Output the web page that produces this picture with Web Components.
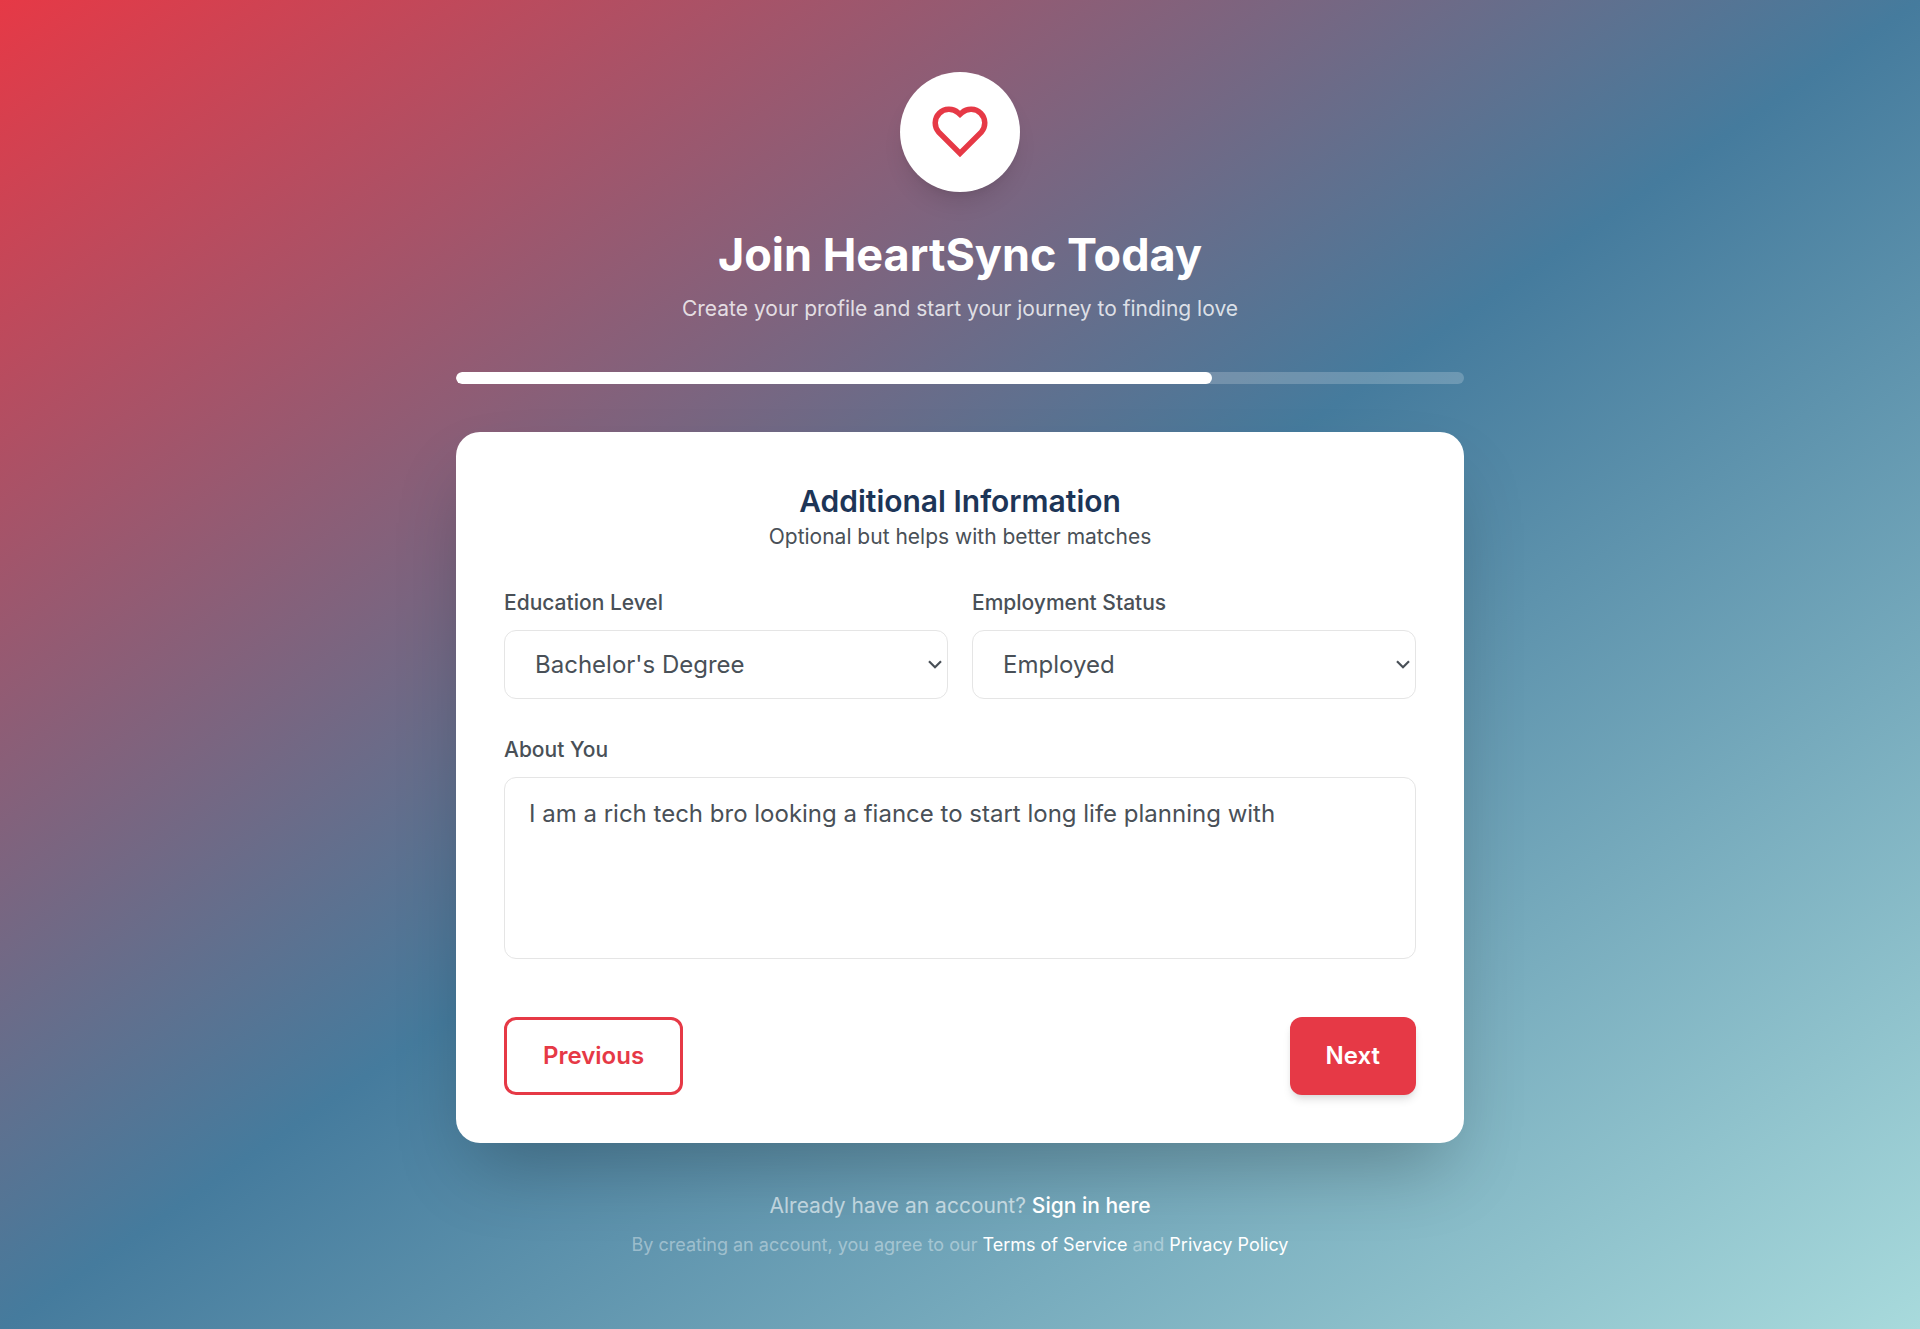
<!DOCTYPE html>
<html lang="en">
<head>
<meta charset="utf-8">
<title>HeartSync</title>
<style>
html,body{margin:0;min-height:100%}
body{font-family:Inter,"Liberation Sans",sans-serif;background:linear-gradient(to bottom right,#e63946 0%,#457b9d 50%,#a8dadc 100%);color:#495057}
</style>
</head>
<body>
<signup-page></signup-page>
<script>
const define=(name,html)=>customElements.define(name,class extends HTMLElement{
  constructor(){
    super();
    const t=document.createElement('template');
    t.innerHTML=html;
    this.attachShadow({mode:'open'}).append(t.content.cloneNode(true));
  }
});

define('brand-mark',`<style>
:host{display:flex;align-items:center;justify-content:center;width:120px;height:120px;border-radius:50%;background:#fff;box-shadow:0 15px 22.5px -4.5px rgba(0,0,0,.1),0 6px 9px -6px rgba(0,0,0,.1)}
svg{width:66px;height:66px;fill:#e63946;display:block}
</style>
<svg viewBox="0 0.27 24 24"><path d="M12.001 4.529a5.998 5.998 0 0 1 8.242.228 6 6 0 0 1 .236 8.236l-8.48 8.492-8.478-8.492a6 6 0 0 1 8.48-8.464zm6.826 1.641a3.998 3.998 0 0 0-5.49-.153l-1.335 1.198-1.336-1.197a4 4 0 0 0-5.686 5.605L12 18.654l7.02-7.03a4 4 0 0 0-.193-5.454z"/></svg>`);

define('page-header',`<style>
:host{display:flex;flex-direction:column;align-items:center;text-align:center}
h1{margin:36px 0 12px;font-size:45px;line-height:54px;font-weight:700;color:#fff}
p{margin:0;font-size:21px;line-height:30px;color:rgba(255,255,255,.8)}
</style>
<brand-mark></brand-mark><h1><slot name="title"></slot></h1><p><slot></slot></p>`);

define('progress-bar',`<style>
:host{display:block;height:12px;border-radius:6px;background:rgba(255,255,255,.2);overflow:hidden}
div{width:75%;height:100%;border-radius:6px;background:#fff}
</style><div></div>`);

define('form-card',`<style>
:host{display:flex;flex-direction:column;padding:48px;border-radius:24px;background:#fff;box-shadow:0 37.5px 75px -18px rgba(0,0,0,.25)}
header{text-align:center;margin-bottom:36px}
h2{margin:0;font-size:30px;line-height:42px;font-weight:600;color:#1d3557}
p{margin:0;font-size:21px;line-height:30px}
footer{display:flex;justify-content:space-between;margin-top:58px}
</style>
<header><h2><slot name="title"></slot></h2><p><slot name="hint"></slot></p></header>
<slot></slot>
<footer><slot name="actions"></slot></footer>`);

define('field-row',`<style>
:host{display:grid;grid-template-columns:1fr 1fr;gap:24px;margin-bottom:36px}
</style><slot></slot>`);

define('form-field',`<style>
:host{display:flex;flex-direction:column;gap:12px}
label{font-size:21px;line-height:30px;font-weight:500}
</style><label><slot name="label"></slot></label><slot></slot>`);

define('select-box',`<style>
:host{box-sizing:border-box;display:flex;align-items:center;justify-content:space-between;height:69px;padding:0 5px 0 30px;border:1px solid #e5e5e5;border-radius:12px;font-size:24px;line-height:36px}
svg{width:14px;height:9px;fill:none;stroke:#495057;stroke-width:2.2}
</style><span><slot></slot></span><svg viewBox="0 0 14 9"><path d="M1 1.2 7 7.2 13 1.2"/></svg>`);

define('text-box',`<style>
:host{box-sizing:border-box;display:block;height:182px;padding:18px 24px;border:1px solid #e5e5e5;border-radius:12px;font-size:24px;line-height:36px}
</style><slot></slot>`);

define('action-button',`<style>
:host{display:block}
button{display:block;box-sizing:border-box;height:78px;padding:0 36px;border:0;border-radius:12px;font:600 24px/36px Inter,"Liberation Sans",sans-serif;background:#e63946;color:#fff;box-shadow:0 6px 9px -1.5px rgba(0,0,0,.1),0 3px 6px -3px rgba(0,0,0,.1)}
:host([outline]) button{background:#fff;color:#e63946;border:3px solid #e63946;box-shadow:none}
</style><button><slot></slot></button>`);

define('page-footer',`<style>
:host{display:flex;flex-direction:column;gap:12px;text-align:center}
p{margin:0}
.account{font-size:21px;line-height:30px;color:rgba(255,255,255,.6)}
.legal{font-size:18px;line-height:24px;color:rgba(255,255,255,.4)}
a{color:#fff}
.account a{font-weight:500}
</style>
<p class="account">Already have an account? <a>Sign in here</a></p>
<p class="legal">By creating an account, you agree to our <a>Terms of Service</a> and <a>Privacy Policy</a></p>`);

define('signup-page',`<style>
:host{box-sizing:border-box;display:flex;flex-direction:column;gap:48px;width:1008px;height:1329px;margin:0 auto;padding:72px 0}
</style>
<page-header><span slot="title">Join HeartSync Today</span>Create your profile and start your journey to finding love</page-header>
<progress-bar></progress-bar>
<form-card>
<span slot="title">Additional Information</span><span slot="hint">Optional but helps with better matches</span>
<field-row>
<form-field><span slot="label">Education Level</span><select-box>Bachelor's Degree</select-box></form-field>
<form-field><span slot="label">Employment Status</span><select-box>Employed</select-box></form-field>
</field-row>
<form-field><span slot="label">About You</span><text-box>I am a rich tech bro looking a fiance to start long life planning with</text-box></form-field>
<action-button slot="actions" outline>Previous</action-button>
<action-button slot="actions">Next</action-button>
</form-card>
<page-footer></page-footer>`);
</script>
</body>
</html>
